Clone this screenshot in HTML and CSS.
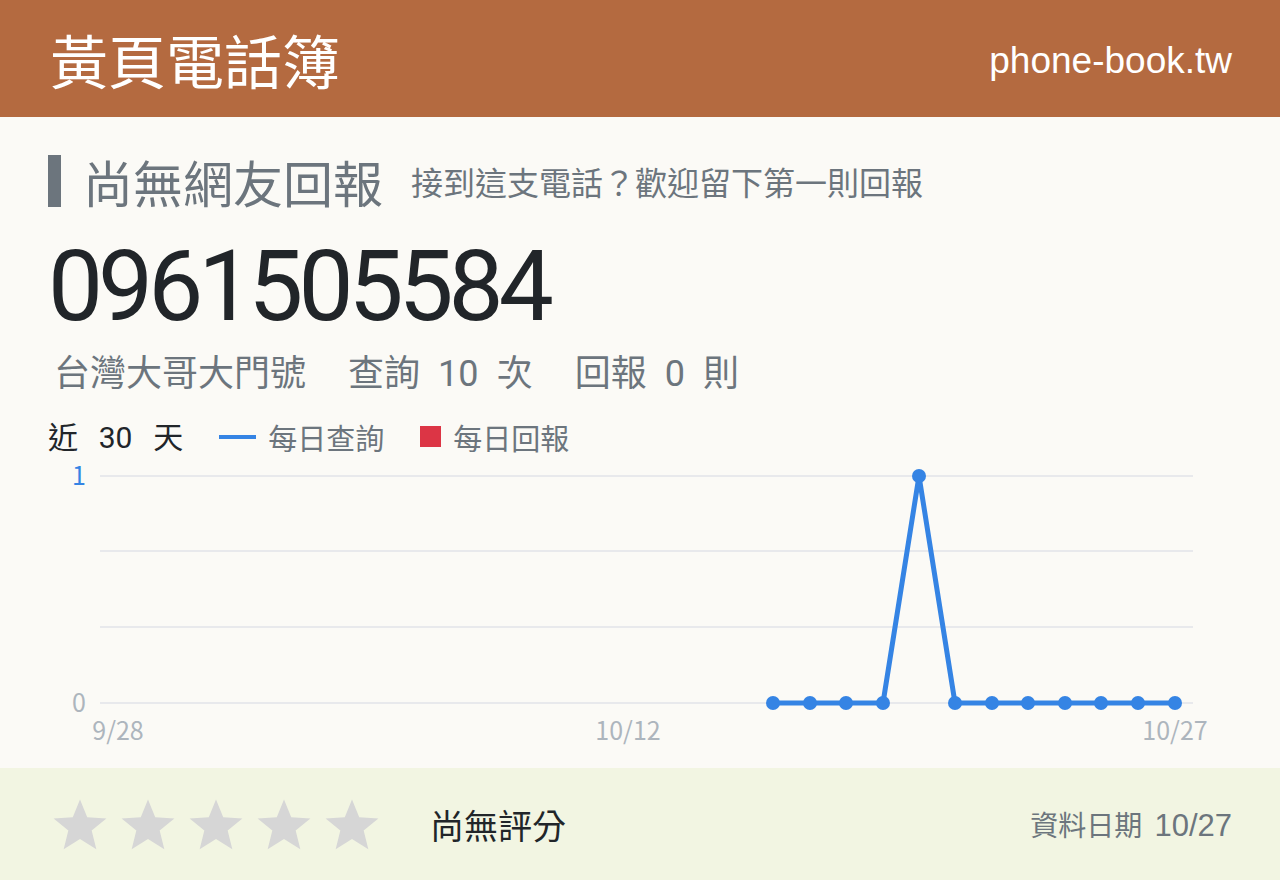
FILE: index.html
```html
<!DOCTYPE html>
<html lang="zh-TW">
<head>
  <meta charset="UTF-8" />
  <meta name="viewport" content="width=device-width, initial-scale=1" />
  <title>0961505584 - 黃頁電話簿</title>
  <link rel="stylesheet" href="styles.css">
</head>
<body>

  <header class="topbar">
    <h1 class="brand">黃頁電話簿</h1>
    <span class="domain">phone-book.tw</span>
  </header>

  <main class="content">
    <div class="report-title">
      <h2>尚無網友回報</h2>
      <span class="hint">接到這支電話？歡迎留下第一則回報</span>
    </div>

    <div class="phone">0961505584</div>

    <div class="stats">
      <span>台灣大哥大門號</span>
      <span>查詢 <b>10</b> 次</span>
      <span>回報 <b>0</b> 則</span>
    </div>

    <div class="chart-head">
      <span class="range">近 <b>30</b> 天</span>
      <span class="legend"><i class="key-line"></i>每日查詢</span>
      <span class="legend"><i class="key-box"></i>每日回報</span>
    </div>

    <svg class="chart" width="1184" height="310" viewBox="0 0 1184 310">
      <g class="grid">
        <line x1="52" y1="24" x2="1145" y2="24"></line>
        <line x1="52" y1="99" x2="1145" y2="99"></line>
        <line x1="52" y1="175" x2="1145" y2="175"></line>
        <line x1="52" y1="251" x2="1145" y2="251"></line>
      </g>
      <text class="y-top" x="38" y="33" text-anchor="end">1</text>
      <text class="y-label" x="38" y="260" text-anchor="end">0</text>
      <text class="x-label" x="70" y="288" text-anchor="middle">9/28</text>
      <text class="x-label" x="580" y="288" text-anchor="middle">10/12</text>
      <text class="x-label" x="1127" y="288" text-anchor="middle">10/27</text>
      <polyline class="series" points="725,251 762,251 798,251 835,251 871,24 907,251 944,251 980,251 1017,251 1053,251 1090,251 1127,251"></polyline>
      <g class="dots">
        <circle cx="725" cy="251" r="7"></circle>
        <circle cx="762" cy="251" r="7"></circle>
        <circle cx="798" cy="251" r="7"></circle>
        <circle cx="835" cy="251" r="7"></circle>
        <circle cx="871" cy="24" r="7"></circle>
        <circle cx="907" cy="251" r="7"></circle>
        <circle cx="944" cy="251" r="7"></circle>
        <circle cx="980" cy="251" r="7"></circle>
        <circle cx="1017" cy="251" r="7"></circle>
        <circle cx="1053" cy="251" r="7"></circle>
        <circle cx="1090" cy="251" r="7"></circle>
        <circle cx="1127" cy="251" r="7"></circle>
      </g>
    </svg>
  </main>

  <footer class="rating-bar">
    <div class="stars">
      <svg viewBox="0 0 24 24"><path d="M12 1.5l3.1 7.6 8.2.5-6.3 5.2 2 8-7-4.4-7 4.4 2-8L.7 9.6l8.2-.5z"/></svg>
      <svg viewBox="0 0 24 24"><path d="M12 1.5l3.1 7.6 8.2.5-6.3 5.2 2 8-7-4.4-7 4.4 2-8L.7 9.6l8.2-.5z"/></svg>
      <svg viewBox="0 0 24 24"><path d="M12 1.5l3.1 7.6 8.2.5-6.3 5.2 2 8-7-4.4-7 4.4 2-8L.7 9.6l8.2-.5z"/></svg>
      <svg viewBox="0 0 24 24"><path d="M12 1.5l3.1 7.6 8.2.5-6.3 5.2 2 8-7-4.4-7 4.4 2-8L.7 9.6l8.2-.5z"/></svg>
      <svg viewBox="0 0 24 24"><path d="M12 1.5l3.1 7.6 8.2.5-6.3 5.2 2 8-7-4.4-7 4.4 2-8L.7 9.6l8.2-.5z"/></svg>
    </div>
    <span class="no-rating">尚無評分</span>
    <span class="updated">資料日期 <b>10/27</b></span>
  </footer>

</body>
</html>
```

FILE: styles.css
```css
* {
  margin: 0;
  padding: 0;
  box-sizing: border-box;
}
body {
  width: 1280px;
  height: 880px;
  background: #fbfaf6;
  color: #212529;
  font-family: "Noto Sans CJK TC", "Noto Sans", sans-serif;
  display: flex;
  flex-direction: column;
  overflow: hidden;
}
.topbar {
  height: 117px;
  flex-shrink: 0;
  background: #b46a40;
  color: white;
  display: flex;
  align-items: center;
  justify-content: space-between;
  padding: 0 48px 0 50px;
}
.brand {
  font-size: 58px;
  font-weight: 400;
  line-height: 1;
}
.domain {
  font-family: "Liberation Sans", Arial, sans-serif;
  font-size: 37px;
  padding-top: 5px;
}
.content {
  flex: 1;
  min-height: 0;
  padding: 38px 48px 0 48px;
}
.report-title {
  display: flex;
  align-items: center;
  gap: 28px;
  color: #6c757d;
}
.report-title h2 {
  font-size: 50px;
  font-weight: 400;
  line-height: 52px;
  border-left: 13px solid #6c757d;
  padding-left: 22px;
}
.hint {
  font-size: 32px;
}
.phone {
  font-family: Roboto, "Liberation Sans", sans-serif;
  font-size: 98px;
  letter-spacing: -5px;
  line-height: 1;
  margin-top: 31px;
}
.stats {
  display: flex;
  gap: 42px;
  color: #6c757d;
  font-size: 36px;
  margin-top: 8px;
  padding-left: 6px;
}
.stats b {
  font-family: Roboto, sans-serif;
  font-weight: 400;
  margin: 0 10px;
}
.chart-head {
  display: flex;
  align-items: center;
  gap: 36px;
  margin-top: 24px;
  font-size: 29px;
  line-height: 30px;
}
.range {
  font-size: 30px;
}
.range b {
  font-family: Roboto, sans-serif;
  font-weight: 400;
  margin: 0 14px;
}
.legend {
  display: flex;
  align-items: center;
  gap: 12px;
  color: #6c757d;
}
.key-line {
  width: 37px;
  height: 4px;
  background: #3584e4;
}
.key-box {
  width: 21px;
  height: 21px;
  background: #dc3545;
}
.chart {
  display: block;
  margin-top: -1px;
}
.grid line {
  stroke: #e8e9ec;
  stroke-width: 2;
}
.chart text {
  font-family: "Noto Sans CJK TC", sans-serif;
  font-size: 25px;
  fill: #adb5bd;
}
.chart .y-top {
  fill: #3584e4;
}
.series {
  fill: none;
  stroke: #3584e4;
  stroke-width: 5;
  stroke-linejoin: round;
}
.dots circle {
  fill: #3584e4;
}
.rating-bar {
  height: 112px;
  flex-shrink: 0;
  background: #f2f5e2;
  display: flex;
  align-items: center;
  padding: 0 48px 0 52px;
}
.stars {
  display: flex;
  gap: 12px;
}
.stars svg {
  width: 56px;
  height: 56px;
  fill: #d6d6d6;
}
.no-rating {
  font-size: 34px;
  margin-left: 50px;
}
.updated {
  margin-left: auto;
  color: #6c757d;
  font-size: 28px;
}
.updated b {
  font-family: "Liberation Sans", Arial, sans-serif;
  font-weight: 400;
  font-size: 31px;
  margin-left: 6px;
}
```
